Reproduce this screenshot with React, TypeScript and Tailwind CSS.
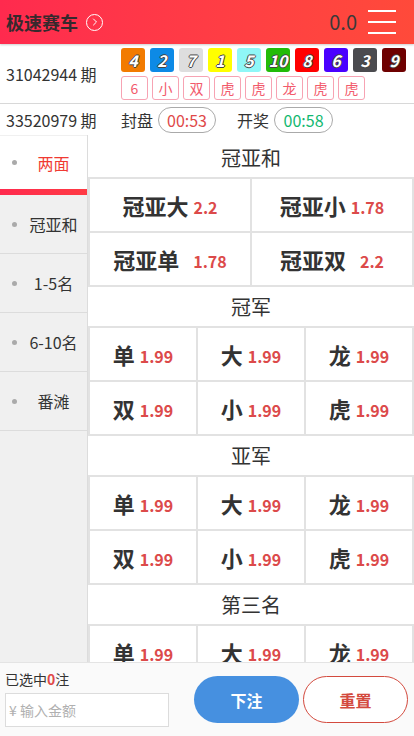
import { ChevronRight } from "lucide-react";

const BALLS = [
  { n: 4, bg: "bg-[#f27b00]" },
  { n: 2, bg: "bg-[#0d8ae6]" },
  { n: 7, bg: "bg-[#dedede]" },
  { n: 1, bg: "bg-[#ffff00]" },
  { n: 5, bg: "bg-[#8ff7f7]" },
  { n: 10, bg: "bg-[#22bb08]" },
  { n: 8, bg: "bg-[#ff0000]" },
  { n: 6, bg: "bg-[#4a00ff]" },
  { n: 3, bg: "bg-[#4b4b4f]" },
  { n: 9, bg: "bg-[#6e0000]" },
];

const TAGS = ["6", "小", "双", "虎", "虎", "龙", "虎", "虎"];

const NAV = ["两面", "冠亚和", "1-5名", "6-10名", "番滩"];

const SIX = [
  ["单", "1.99"],
  ["大", "1.99"],
  ["龙", "1.99"],
  ["双", "1.99"],
  ["小", "1.99"],
  ["虎", "1.99"],
];

function Cell({ label, odds, wide }: { label: string; odds: string; wide?: boolean }) {
  return (
    <div className="flex h-[52px] items-center justify-center bg-white">
      <span className="text-[22px] font-bold leading-none text-[#333]">{label}</span>
      <span className={`${wide ? "ml-[14px]" : "ml-[5px]"} mt-[3px] text-[16px] font-bold leading-none text-[#dc4a4a]`}>
        {odds}
      </span>
    </div>
  );
}

function Section({ title, children, cols }: { title: string; children: React.ReactNode; cols: 2 | 3 }) {
  return (
    <div>
      <div className="flex h-[39px] items-center justify-center text-[20px] leading-none text-[#333]">{title}</div>
      <div
        className={`grid ${cols === 2 ? "grid-cols-2" : "grid-cols-3"} gap-[2px] border-2 border-[#e2e2e2] bg-[#e2e2e2]`}
      >
        {children}
      </div>
    </div>
  );
}

export default function App() {
  return (
    <div className="flex h-[736px] w-[414px] flex-col overflow-hidden bg-white font-['Noto_Sans_CJK_SC',sans-serif] text-[#333]">
      {/* header */}
      <header className="relative z-10 flex h-[44px] shrink-0 items-center bg-gradient-to-r from-[#ff2a4e] to-[#ff4a3a] pl-[6px] pr-[18px] shadow-[0_1px_2px_rgba(0,0,0,0.2)]">
        <span className="text-[18px] font-bold leading-none text-[#36292d]">极速赛车</span>
        <span className="ml-[8px] flex h-[17px] w-[17px] items-center justify-center rounded-full border-[1.5px] border-white">
          <ChevronRight className="h-[12px] w-[12px] text-white" strokeWidth={2} />
        </span>
        <span className="ml-auto text-[20px] leading-none text-[#3a3a3a]">0.0</span>
        <div className="ml-[11px] flex w-[28px] flex-col gap-[9px]">
          <div className="h-[2px] bg-white" />
          <div className="h-[2px] bg-white" />
          <div className="h-[2px] bg-white" />
        </div>
      </header>

      {/* last result */}
      <div className="flex h-[60px] shrink-0 items-center border-b border-[#d8d8d8] pl-[6px]">
        <span className="w-[115px] text-[16px] leading-none">31042944 期</span>
        <div className="flex flex-col gap-[4px]">
          <div className="flex gap-[5px]">
            {BALLS.map((b) => (
              <div
                key={b.n}
                className={`flex h-[24px] w-[24px] items-center justify-center rounded-[3px] ${b.bg} text-[16px] font-bold italic leading-none text-white [text-shadow:-1px_0_#444,1px_0_#444,0_-1px_#444,0_1px_#444]`}
              >
                {b.n}
              </div>
            ))}
          </div>
          <div className="flex gap-[4px]">
            {TAGS.map((t, i) => (
              <div
                key={i}
                className="flex h-[24px] w-[27px] items-center justify-center rounded-[3px] border border-[#f7a3b3] text-[14px] leading-none text-[#f25a6c]"
              >
                {t}
              </div>
            ))}
          </div>
        </div>
      </div>

      {/* current */}
      <div className="flex h-[31px] shrink-0 items-center pl-[6px] text-[16px] leading-none">
        <span className="w-[115px]">33520979 期</span>
        <span>封盘</span>
        <span className="ml-[5px] flex h-[26px] w-[58px] items-center justify-center rounded-full border border-[#aaa] text-[#e04848]">
          00:53
        </span>
        <span className="ml-[21px]">开奖</span>
        <span className="ml-[5px] flex h-[26px] w-[59px] items-center justify-center rounded-full border border-[#aaa] text-[#12b870]">
          00:58
        </span>
      </div>

      {/* body */}
      <div className="flex min-h-0 flex-1">
        <aside className="w-[88px] shrink-0 border-r border-[#dcdcdc] bg-[#f0f0f0] pt-[1px]">
          {NAV.map((n, i) =>
            i === 0 ? (
              <div key={n} className="bg-white">
                <div className="flex h-[53px] items-center">
                  <span className="ml-[12px] h-[5px] w-[5px] rounded-full bg-[#aaa]" />
                  <span className="flex-1 pl-[3px] text-center text-[16px] leading-none text-[#f03a32]">{n}</span>
                </div>
                <div className="h-[6px] bg-gradient-to-r from-[#ff2a4e] to-[#ff3a44]" />
              </div>
            ) : (
              <div key={n} className="flex h-[59px] items-center border-b border-[#dcdcdc]">
                <span className="ml-[12px] h-[5px] w-[5px] rounded-full bg-[#aaa]" />
                <span className="flex-1 pl-[3px] text-center text-[16px] leading-none text-[#333]">{n}</span>
              </div>
            )
          )}
        </aside>

        <main className="min-w-0 flex-1 overflow-hidden pt-[3px]">
          <Section title="冠亚和" cols={2}>
            <Cell label="冠亚大" odds="2.2" />
            <Cell label="冠亚小" odds="1.78" />
            <Cell label="冠亚单" odds="1.78" wide />
            <Cell label="冠亚双" odds="2.2" wide />
          </Section>
          {["冠军", "亚军", "第三名"].map((t) => (
            <Section key={t} title={t} cols={3}>
              {SIX.map(([l, o]) => (
                <Cell key={l} label={l} odds={o} />
              ))}
            </Section>
          ))}
        </main>
      </div>

      {/* footer */}
      <footer className="flex h-[74px] shrink-0 items-center border-t border-[#e4e4e4] bg-[#fafafa] px-[5px]">
        <div className="flex flex-col">
          <span className="text-[14px] leading-none text-[#333]">
            已选中<span className="font-bold text-[#e04848]">0</span>注
          </span>
          <div className="mt-[7px] flex h-[34px] w-[164px] items-center border border-[#dcdcdc] bg-white pl-[3px] text-[14px] leading-none text-[#b0b0b0]">
            ¥ 输入金额
          </div>
        </div>
        <button className="ml-[25px] flex h-[47px] w-[105px] items-center justify-center rounded-full bg-[#4690e0] text-[16px] font-bold text-white">
          下注
        </button>
        <button className="ml-[4px] flex h-[47px] w-[105px] items-center justify-center rounded-full border border-[#d34a3e] bg-white text-[16px] font-bold text-[#d34a3e]">
          重置
        </button>
      </footer>
    </div>
  );
}
